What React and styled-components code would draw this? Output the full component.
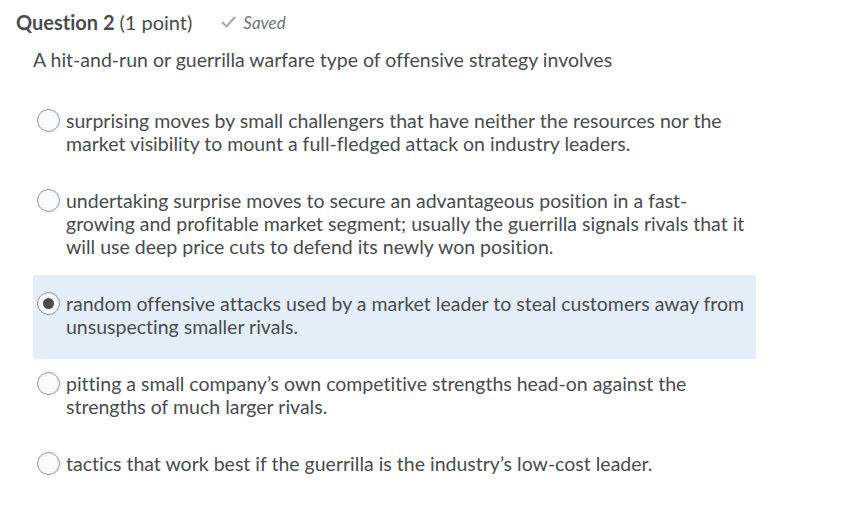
import styled, { createGlobalStyle } from "styled-components"

const GlobalStyle = createGlobalStyle`
  body {
    margin: 0;
    background: #ffffff;
    font-family: Lato, "Open Sans", sans-serif;
    color: #494c4e;
    font-variant-ligatures: none;
  }
`

const Page = styled.div`
  width: 863px;
  height: 520px;
  padding: 10px 0 0 16px;
  box-sizing: border-box;
`

const Header = styled.div`
  display: flex;
  align-items: center;
  height: 24px;
`

const Title = styled.h2`
  margin: 0;
  font-size: 20px;
  font-weight: 700;
  color: #494c4e;
`

const Points = styled.span`
  font-weight: 400;
`

const SavedTag = styled.span`
  display: flex;
  align-items: center;
  gap: 7px;
  margin-left: 29px;
  font-size: 17px;
  font-style: italic;
  color: #6e7376;
`

const Prompt = styled.p`
  margin: 14px 0 0 17px;
  font-size: 19.5px;
  line-height: 24px;
`

const Options = styled.div`
  margin-top: 20px;
  margin-left: 17px;
  width: 723px;
  display: flex;
  flex-direction: column;
`

const Option = styled.label`
  display: flex;
  align-items: flex-start;
  gap: 6px;
  padding: 17px 4px ${props => (props.selected ? "21px" : "17px")} 4px;
  margin-bottom: ${props => (props.selected ? "-4px" : "0")};
  background: ${props => (props.selected ? "#e3eef9" : "transparent")};
  font-size: 19.5px;
  line-height: 23px;
`

const Radio = styled.span`
  flex: 0 0 auto;
  width: 21px;
  height: 21px;
  border-radius: 50%;
  border: 1.5px solid #8d9194;
  background: #f9fbff;
  display: flex;
  align-items: center;
  justify-content: center;
`

const Dot = styled.span`
  width: 11px;
  height: 11px;
  border-radius: 50%;
  background: #494c4e;
`

const OptionText = styled.span`
  flex: 1;
`

const answers = [
  "surprising moves by small challengers that have neither the resources nor the market visibility to mount a full-fledged attack on industry leaders.",
  "undertaking surprise moves to secure an advantageous position in a fast-growing and profitable market segment; usually the guerrilla signals rivals that it will use deep price cuts to defend its newly won position.",
  "random offensive attacks used by a market leader to steal customers away from unsuspecting smaller rivals.",
  "pitting a small company\u2019s own competitive strengths head-on against the strengths of much larger rivals.",
  "tactics that work best if the guerrilla is the industry\u2019s low-cost leader.",
]

const App = () => {
  return (
    <Page>
      <GlobalStyle />
      <Header>
        <Title>
          Question 2 <Points>(1 point)</Points>
        </Title>
        <SavedTag>
          <svg width="15" height="12" viewBox="0 0 15 12">
            <path d="M1.5 6.5 L5.5 10.5 L13.5 1.5" fill="none" stroke="#a4a8ab" strokeWidth="2" strokeLinecap="round" strokeLinejoin="round" />
          </svg>
          Saved
        </SavedTag>
      </Header>
      <Prompt>A hit-and-run or guerrilla warfare type of offensive strategy involves</Prompt>
      <Options>
        {answers.map((a, i) => (
          <Option key={i} selected={i === 2}>
            <Radio>{i === 2 && <Dot />}</Radio>
            <OptionText>{a}</OptionText>
          </Option>
        ))}
      </Options>
    </Page>
  )
}

export default App
